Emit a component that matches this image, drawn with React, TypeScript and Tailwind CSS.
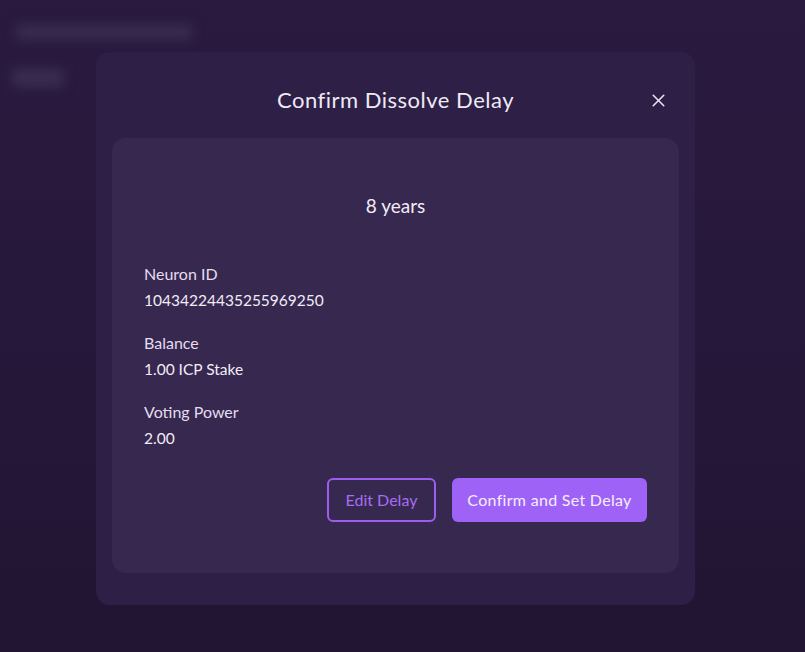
import { X } from "lucide-react";

const font = { fontFamily: "'Lato', 'Noto Sans', sans-serif" };

function Field({ label, value }: { label: string; value: string }) {
  return (
    <div className="flex flex-col gap-[6px]">
      <span className="text-[16px] leading-[20px] text-[#e4dcef]">{label}</span>
      <span className="text-[15.5px] leading-[20px] text-[#f1ecf7]">{value}</span>
    </div>
  );
}

export default function App() {
  return (
    <div
      className="relative h-[652px] w-[805px] overflow-hidden bg-gradient-to-b from-[#2a1a40] to-[#211533]"
      style={font}
    >
      {/* blurred page behind the modal */}
      <div className="absolute left-[16px] top-[25px] h-[14px] w-[176px] rounded bg-[#3a2c52] blur-[6px]" />
      <div className="absolute left-[12px] top-[69px] h-[18px] w-[52px] rounded bg-[#3a2c52] blur-[6px]" />

      <div className="flex pl-[96px] pt-[52px]">
        <div className="flex h-[553px] w-[599px] flex-col rounded-[14px] bg-[#2d1f45] px-[16px] pb-[32px]">
          <div className="relative flex h-[86px] items-center justify-center">
            <h2 className="pt-[8px] text-[22px] tracking-[0.5px] text-[#efe9f6]">Confirm Dissolve Delay</h2>
            <button className="absolute right-[10px] top-[38px] text-[#e8e2f0]">
              <X size={21} strokeWidth={1.8} />
            </button>
          </div>

          <div className="flex flex-1 flex-col rounded-[14px] bg-[#37284f] px-[32px]">
            <div className="pt-[54px] text-center text-[19px] text-[#f1ecf7]">8 years</div>
            <div className="mt-[43px] flex flex-col gap-[23px]">
              <Field label="Neuron ID" value="10434224435255969250" />
              <Field label="Balance" value="1.00 ICP Stake" />
              <Field label="Voting Power" value="2.00" />
            </div>
            <div className="mt-[30px] flex justify-end gap-[16px]">
              <button className="h-[44px] w-[109px] rounded-[6px] border-2 border-[#9b5ef0] text-[16px] text-[#a66df2]">
                Edit Delay
              </button>
              <button className="h-[44px] w-[195px] rounded-[6px] bg-[#9f62f6] text-[16px] tracking-[0.3px] text-[#f4eefc]">
                Confirm and Set Delay
              </button>
            </div>
          </div>
        </div>
      </div>
    </div>
  );
}
